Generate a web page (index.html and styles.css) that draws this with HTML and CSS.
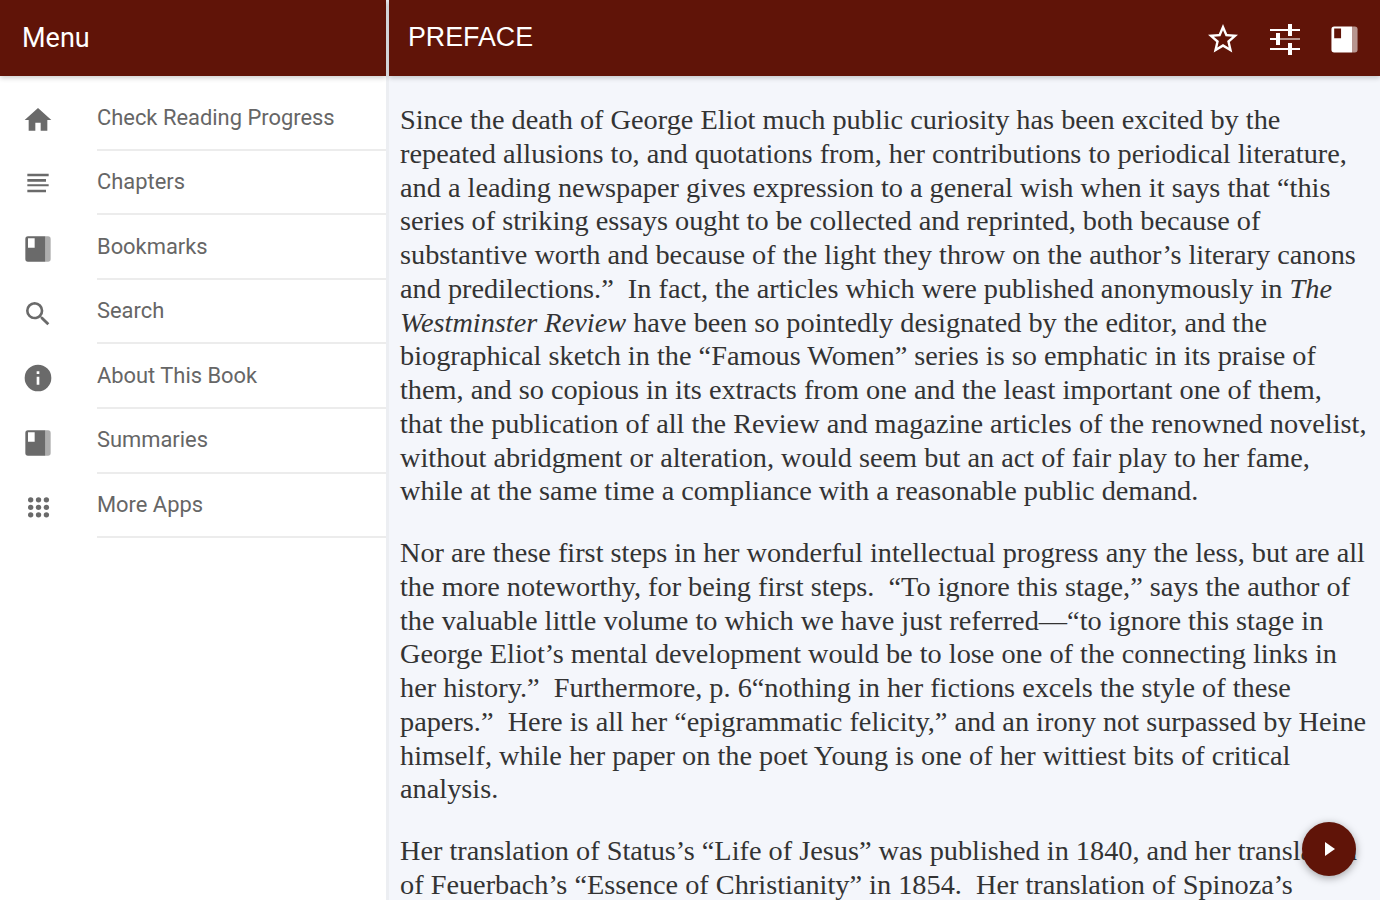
FILE: index.html
```html
<!DOCTYPE html>
<html lang="en">

<head>
    <meta charset="UTF-8">
    <meta name="viewport" content="width=device-width, initial-scale=1.0">
    <title>PREFACE</title>
    <link rel="stylesheet" href="styles.css">
</head>

<body>
    <div class="app">
        <aside class="sidebar">
            <header class="bar bar-menu">
                <h2>Menu</h2>
            </header>
            <nav class="menu">
                <a class="menu-item">
                    <svg class="menu-icon" viewBox="0 0 24 24"><path d="M10 20v-6h4v6h5v-8h3L12 3 2 12h3v8z"/></svg>
                    <span class="menu-label">Check Reading Progress</span>
                </a>
                <a class="menu-item">
                    <svg class="menu-icon" viewBox="0 0 24 24"><path d="M4 3.500h16v2H4zM4 7.500h14v2H4zM4 11.500h16v1.500H4zM4 15.500h14v2H4z"/></svg>
                    <span class="menu-label">Chapters</span>
                </a>
                <a class="menu-item">
                    <svg class="menu-icon" viewBox="0 0 24 24"><use href="#book"/></svg>
                    <span class="menu-label">Bookmarks</span>
                </a>
                <a class="menu-item">
                    <svg class="menu-icon" viewBox="0 0 24 24"><path d="M15.500 14h-.79l-.28-.27A6.470 6.470 0 0 0 16 9.500 6.500 6.500 0 1 0 9.500 16c1.610 0 3.090-.59 4.230-1.570l.27.28v.79l5 4.990L20.490 19l-4.990-5zm-6 0C7.010 14 5 11.990 5 9.500S7.010 5 9.500 5 14 7.010 14 9.500 11.990 14 9.500 14z"/></svg>
                    <span class="menu-label">Search</span>
                </a>
                <a class="menu-item">
                    <svg class="menu-icon" viewBox="0 0 24 24"><path d="M12 2a10 10 0 1 0 0 20 10 10 0 0 0 0-20zm1 15h-2v-6h2v6zm0-8h-2V7h2v2z"/></svg>
                    <span class="menu-label">About This Book</span>
                </a>
                <a class="menu-item">
                    <svg class="menu-icon" viewBox="0 0 24 24"><use href="#book"/></svg>
                    <span class="menu-label">Summaries</span>
                </a>
                <a class="menu-item">
                    <svg class="menu-icon" viewBox="0 0 24 24">
                        <circle cx="6.500" cy="5.900" r="2"/><circle cx="12.400" cy="5.900" r="2"/><circle cx="18.300" cy="5.900" r="2"/>
                        <circle cx="6.500" cy="11.500" r="2"/><circle cx="12.400" cy="11.500" r="2"/><circle cx="18.300" cy="11.500" r="2"/>
                        <circle cx="6.500" cy="17.100" r="2"/><circle cx="12.400" cy="17.100" r="2"/><circle cx="18.300" cy="17.100" r="2"/>
                    </svg>
                    <span class="menu-label">More Apps</span>
                </a>
            </nav>
        </aside>

        <main class="reader">
            <header class="bar bar-title">
                <h2>PREFACE</h2>
                <div class="bar-icons">
                    <svg class="bar-icon" viewBox="0 0 24 24"><path d="M22 9.240l-7.190-.62L12 2 9.190 8.630 2 9.240l5.460 4.730L5.820 21 12 17.270 18.180 21l-1.630-7.030L22 9.240zM12 15.400l-3.760 2.270 1-4.280-3.320-2.880 4.380-.38L12 6.100l1.710 4.040 4.380.38-3.320 2.880 1 4.280L12 15.400z"/></svg>
                    <svg class="bar-icon icon-sliders" viewBox="0 0 32 32">
                        <path d="M1 6h18V1h4v5h8v2h-8v5h-4V8H1zM1 25h18v-5h4v5h8v2h-8v5h-4v-5H1zM1 15h6v-5h4v5h0v2H11v5H7v-5H1z"/>
                        <path class="icon-faded" d="M11 15h20v2H11z"/>
                    </svg>
                    <svg class="bar-icon icon-book" viewBox="0 0 24 24"><use href="#book"/></svg>
                </div>
            </header>
            <article class="page">
                <p>Since the death of George Eliot much public curiosity has been excited by the repeated allusions to, and quotations from, her contributions to periodical literature, and a leading newspaper gives expression to a general wish when it says that “this series of striking essays ought to be collected and reprinted, both because of substantive worth and because of the light they throw on the author’s literary canons and predilections.”&nbsp; In fact, the articles which were published anonymously in <em>The</em> <em>Westminster Review</em> have been so pointedly designated by the editor, and the biographical sketch in the “Famous Women” series is so emphatic in its praise of them, and so copious in its extracts from one and the least important one of them, that the publication of all the Review and magazine articles of the renowned novelist, without abridgment or alteration, would seem but an act of fair play to her fame, while at the same time a compliance with a reasonable public demand.</p>
                <p>Nor are these first steps in her wonderful intellectual progress any the less, but are all the more noteworthy, for being first steps.&nbsp; “To ignore this stage,” says the author of the valuable little volume to which we have just referred—“to ignore this stage in George Eliot’s mental development would be to lose one of the connecting links in her history.”&nbsp; Furthermore, p. 6“nothing in her fictions excels the style of these papers.”&nbsp; Here is all her “epigrammatic felicity,” and an irony not surpassed by Heine himself, while her paper on the poet Young is one of her wittiest bits of critical analysis.</p>
                <p>Her translation of Status’s “Life of Jesus” was published in 1840, and her translation of Feuerbach’s “Essence of Christianity” in 1854.&nbsp; Her translation of Spinoza’s</p>
            </article>
            <button class="fab">
                <svg viewBox="0 0 24 24"><path d="M8 5v14l10-7z"/></svg>
            </button>
        </main>
    </div>

    <svg class="defs" width="0" height="0">
        <symbol id="book" viewBox="0 0 24 24">
            <path fill-rule="evenodd" d="M4.500 2.500h13v19h-13a2 2 0 0 1-2-2v-15a2 2 0 0 1 2-2zM4.500 4v7h5V4z"/>
            <path class="icon-faded" d="M17.500 2.500h2a2 2 0 0 1 2 2v15a2 2 0 0 1-2 2h-2z"/>
        </symbol>
    </svg>
</body>

</html>
```

FILE: styles.css
```css
* {
    box-sizing: border-box;
}

html,
body {
    height: 100%;
}

body {
    margin: 0;
    overflow: hidden;
    font-family: Roboto, 'Liberation Sans', sans-serif;
    background: #fff;
}

.defs {
    position: absolute;
}

.app {
    display: flex;
    height: 100%;
}

.bar {
    display: flex;
    align-items: center;
    flex: none;
    height: 76px;
    background-color: #601408;
    color: #fff;
    box-shadow: 0 2px 5px rgba(0, 0, 0, 0.2);
    position: relative;
    z-index: 1;
}

.bar h2 {
    margin: 0;
    font-size: 27px;
    font-weight: 400;
}

.bar-menu {
    padding-left: 22px;
}

.bar-title {
    justify-content: space-between;
    padding: 0 19px 0 19px;
}

.bar-title h2 {
    margin-top: -2px;
    font-family: 'Liberation Sans', Arial, sans-serif;
    font-size: 26.8px;
}

.bar-icons {
    display: flex;
    align-items: center;
    gap: 28px;
    margin-top: 2px;
}

.bar-icon {
    width: 36px;
    height: 36px;
    fill: #fff;
}

.icon-sliders {
    width: 32px;
    height: 32px;
}

.icon-book {
    width: 33px;
    height: 33px;
    margin-left: -1px;
}

.icon-faded {
    opacity: 0.55;
}

.sidebar {
    display: flex;
    flex-direction: column;
    flex: none;
    width: 389px;
    border-right: 3px solid #eceef2;
}

.menu {
    padding-top: 10px;
}

.menu-item {
    display: flex;
    align-items: stretch;
    height: 64.6px;
    padding-left: 22px;
    color: #666;
}

.menu-icon {
    flex: none;
    width: 32px;
    height: 32px;
    margin: 18px 43px 0 0;
    fill: #6a6a6a;
}

.menu-label {
    flex: 1;
    padding-top: 18.5px;
    font-size: 21.9px;
    border-bottom: 2px solid #ececec;
}

.reader {
    position: relative;
    display: flex;
    flex-direction: column;
    flex: 1;
    min-width: 0;
    background-color: #f4f6fb;
}

.page {
    padding: 27px 11px 0 11px;
    font-family: 'Liberation Serif', serif;
    font-size: 28.3px;
    line-height: 33.75px;
    color: #333;
}

.page p {
    margin: 0 0 28px;
}

.fab {
    position: absolute;
    right: 24px;
    bottom: 24px;
    display: flex;
    align-items: center;
    justify-content: center;
    width: 54px;
    height: 54px;
    padding: 0;
    border: none;
    border-radius: 50%;
    background-color: #601408;
    box-shadow: 0 2px 8px rgba(0, 0, 0, 0.35);
}

.fab svg {
    width: 24px;
    height: 24px;
    fill: #fff;
}
```
